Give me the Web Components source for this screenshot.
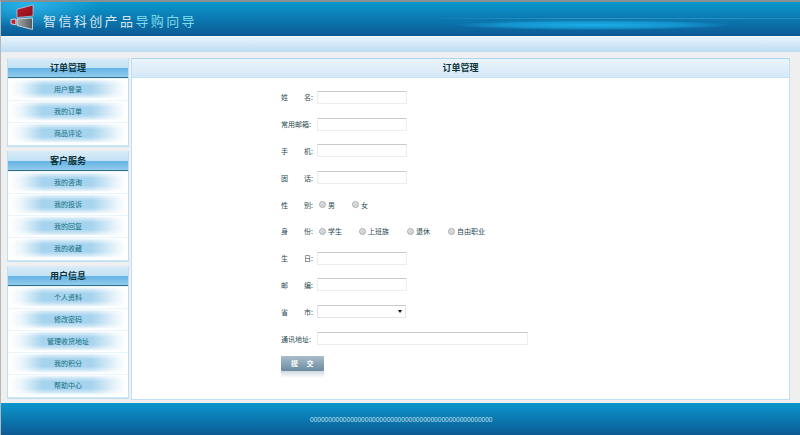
<!DOCTYPE html>
<html lang="zh">
<head>
<meta charset="utf-8">
<title>订单管理</title>
<style>
    html, body {
        margin: 0;
        height: 435px;
        overflow: hidden;
    }
    body {
        display: flex;
        flex-direction: column;
        background: #efefef;
        border-top: 2px solid #8a8f92;
        border-left: 1px solid #b5b8ba;
        box-sizing: border-box;
        font-family: "Liberation Sans", "Noto Sans CJK SC", sans-serif;
    }
    .content {
        flex: 1;
        display: flex;
        gap: 2px;
        padding: 6px 10px 3px 6px;
        min-height: 0;
    }
    .side {
        width: 122px;
        display: flex;
        flex-direction: column;
        gap: 4px;
    }
</style>
</head>
<body>
<app-header></app-header>
<div class="content">
    <div class="side">
        <side-group title="订单管理">
            <side-item>用户登录</side-item>
            <side-item>我的订单</side-item>
            <side-item>商品评论</side-item>
        </side-group>
        <side-group title="客户服务">
            <side-item>我的咨询</side-item>
            <side-item>我的投诉</side-item>
            <side-item>我的回复</side-item>
            <side-item>我的收藏</side-item>
        </side-group>
        <side-group title="用户信息">
            <side-item>个人资料</side-item>
            <side-item>修改密码</side-item>
            <side-item>管理收货地址</side-item>
            <side-item>我的积分</side-item>
            <side-item>帮助中心</side-item>
        </side-group>
    </div>
    <main-panel title="订单管理">
        <form-row a="姓" b="名"><text-field></text-field></form-row>
        <form-row full="常用邮箱"><text-field></text-field></form-row>
        <form-row a="手" b="机"><text-field></text-field></form-row>
        <form-row a="固" b="话"><text-field></text-field></form-row>
        <form-row a="性" b="别">
            <radio-option w="33">男</radio-option>
            <radio-option>女</radio-option>
        </form-row>
        <form-row a="身" b="份">
            <radio-option w="40">学生</radio-option>
            <radio-option w="48">上班族</radio-option>
            <radio-option w="41">退休</radio-option>
            <radio-option>自由职业</radio-option>
        </form-row>
        <form-row a="生" b="日"><text-field></text-field></form-row>
        <form-row a="邮" b="编"><text-field></text-field></form-row>
        <form-row a="省" b="市"><select-field></select-field></form-row>
        <form-row full="通讯地址"><text-field w="211"></text-field></form-row>
        <submit-button>提 交</submit-button>
    </main-panel>
</div>
<app-footer></app-footer>

<script>
const headerTpl = document.createElement('template');
headerTpl.innerHTML = /*html*/`
<style>
    :host { display: block; }
    .top {
        height: 34px;
        display: flex;
        align-items: center;
        gap: 7px;
        padding-left: 9px;
        background:
            radial-gradient(ellipse 140px 5px at 592px 23px, rgba(28,178,238,0.95), rgba(28,178,238,0.55) 65%, rgba(28,178,238,0)),
            linear-gradient(90deg, rgba(130,215,235,0) 52%, rgba(130,215,235,0.3) 72%, rgba(130,215,235,0.2) 100%) 0 16px / 100% 1px no-repeat,
            radial-gradient(ellipse 70px 24px at 30px 2px, rgba(50,185,240,0.8), rgba(50,185,240,0)),
            linear-gradient(#0a97cc, #0d5a94);
    }
    svg { display: block; overflow: visible; margin-top: -2px; }
    h1 {
        margin: 0;
        padding-top: 2px;
        font: 400 13px "Noto Sans CJK SC", sans-serif;
        letter-spacing: 2.4px;
        color: #d9e6ee;
    }
    h1 span { color: #7fdcec; }
    .band {
        height: 16px;
        box-sizing: border-box;
        border-top: 1px solid #f2f8fc;
        background: linear-gradient(#e8f3fb, #bcdcf3);
    }
</style>
<div class="top">
    <svg width="26" height="26" viewBox="0 0 26 26">
        <defs>
            <linearGradient id="red" x1="0" y1="0" x2="1" y2="1">
                <stop offset="0" stop-color="#c01c2c"/>
                <stop offset="1" stop-color="#860f1c"/>
            </linearGradient>
            <linearGradient id="steel" x1="0" y1="0" x2="1" y2="0">
                <stop offset="0" stop-color="#a4a7a9"/>
                <stop offset="1" stop-color="#55595d"/>
            </linearGradient>
        </defs>
        <polygon points="7,4.3 23,0 23,11 7,12.5" fill="url(#red)" stroke="#d9e4ea" stroke-width=".6"/>
        <polygon points="7,14 22.5,13 22.5,24.5 7,20.5" fill="url(#steel)" stroke="#e4e8ea" stroke-width=".8"/>
        <polygon points="1,14.5 5.8,14 5.8,19.8 1,18.8" fill="#c4202c" stroke="#eef0f1" stroke-width=".8"/>
    </svg>
    <h1>智信科创产品<span>导购向导</span></h1>
</div>
<div class="band"></div>
`;
class AppHeader extends HTMLElement {
    constructor() {
        super();
        this.attachShadow({ mode: 'open' });
        this.shadowRoot.appendChild(headerTpl.content.cloneNode(true));
    }
}
customElements.define('app-header', AppHeader);

const groupTpl = document.createElement('template');
groupTpl.innerHTML = /*html*/`
<style>
    :host {
        display: block;
        box-sizing: border-box;
        border: 1px solid #bfe0f4;
        border-top: 0;
        background: #fff;
    }
    h2 {
        margin: 0;
        height: 20px;
        box-sizing: border-box;
        border-bottom: 1px solid #2f6f86;
        background: linear-gradient(#d9ebf7 0, #c3e2f5 50%, #62b2e3 51%, #93cbec 100%);
        font: 700 9px/19px "Noto Sans CJK SC", sans-serif;
        text-align: center;
        color: #0d3338;
    }
    .list {
        display: flex;
        flex-direction: column;
        padding-bottom: 2px;
    }
    .list::after {
        content: '';
        height: 1px;
        margin-top: 1px;
        margin-bottom: -2px;
        background: #cfe6f5;
    }
</style>
<h2></h2>
<div class="list"><slot></slot></div>
`;
class SideGroup extends HTMLElement {
    constructor() {
        super();
        this.attachShadow({ mode: 'open' });
        this.shadowRoot.appendChild(groupTpl.content.cloneNode(true));
        this.shadowRoot.querySelector('h2').textContent = this.getAttribute('title');
        this.removeAttribute('title');
    }
}
customElements.define('side-group', SideGroup);

const itemTpl = document.createElement('template');
itemTpl.innerHTML = /*html*/`
<style>
    :host {
        display: block;
        height: 22px;
        box-sizing: border-box;
        padding: 1px 2px 1px 2px;
        background: linear-gradient(#eaf5fb 0 1px, #fff 1px);
    }
    div {
        height: 20px;
        background:
            linear-gradient(#fff 0, rgba(255,255,255,0.5) 12%, rgba(255,255,255,0) 32%, rgba(255,255,255,0) 68%, rgba(255,255,255,0.5) 88%, #fff 100%),
            linear-gradient(90deg, #fff 0, #eaf5fb 10%, #a6d3ee 28%, #a6d3ee 70%, #eaf5fb 92%, #fff 100%);
        font: 400 7px/21px "Noto Sans CJK SC", sans-serif;
        text-align: center;
        color: #14707f;
    }
</style>
<div><slot></slot></div>
`;
class SideItem extends HTMLElement {
    constructor() {
        super();
        this.attachShadow({ mode: 'open' });
        this.shadowRoot.appendChild(itemTpl.content.cloneNode(true));
    }
}
customElements.define('side-item', SideItem);

const panelTpl = document.createElement('template');
panelTpl.innerHTML = /*html*/`
<style>
    :host {
        display: flex;
        flex-direction: column;
        flex: 1;
        box-sizing: border-box;
        border: 1px solid #bfe0f4;
        border-top-color: #a9d6f2;
        background: #fff;
    }
    h2 {
        margin: 0;
        height: 19px;
        box-sizing: border-box;
        border-bottom: 1px solid #c6e3f5;
        background: linear-gradient(#eaf4fb, #d6e9f7);
        font: 700 9px/18px "Noto Sans CJK SC", sans-serif;
        text-align: center;
        color: #0d3338;
    }
    .form {
        padding: 6px 0 0 149px;
    }
</style>
<h2></h2>
<div class="form"><slot></slot></div>
`;
class MainPanel extends HTMLElement {
    constructor() {
        super();
        this.attachShadow({ mode: 'open' });
        this.shadowRoot.appendChild(panelTpl.content.cloneNode(true));
        this.shadowRoot.querySelector('h2').textContent = this.getAttribute('title');
        this.removeAttribute('title');
    }
}
customElements.define('main-panel', MainPanel);

const rowTpl = document.createElement('template');
rowTpl.innerHTML = /*html*/`
<style>
    :host {
        display: flex;
        align-items: center;
        height: 26.8px;
        font: 400 7px "Noto Sans CJK SC", sans-serif;
        color: #1f4a52;
    }
    .label {
        display: flex;
        justify-content: space-between;
        width: 32px;
        margin-right: 4px;
        white-space: nowrap;
    }
    .field {
        display: flex;
        align-items: center;
    }
</style>
<div class="label"></div>
<div class="field"><slot></slot></div>
`;
class FormRow extends HTMLElement {
    constructor() {
        super();
        this.attachShadow({ mode: 'open' });
        this.shadowRoot.appendChild(rowTpl.content.cloneNode(true));
        const label = this.shadowRoot.querySelector('.label');
        const full = this.getAttribute('full');
        if (full) {
            label.innerHTML = `<span>${full}:</span>`;
        } else {
            label.innerHTML = `<span>${this.getAttribute('a')}</span><span>${this.getAttribute('b')}:</span>`;
        }
    }
}
customElements.define('form-row', FormRow);

const fieldTpl = document.createElement('template');
fieldTpl.innerHTML = /*html*/`
<style>
    :host { display: block; }
    input {
        display: block;
        width: 90px;
        height: 13px;
        margin: 0;
        padding: 0;
        box-sizing: border-box;
        background: #fff;
        border: 1px solid #ecedf0;
        border-top-color: #cacace;
        border-radius: 1px;
        outline: 0;
    }
</style>
<input type="text">
`;
class TextField extends HTMLElement {
    constructor() {
        super();
        this.attachShadow({ mode: 'open' });
        this.shadowRoot.appendChild(fieldTpl.content.cloneNode(true));
        if (this.hasAttribute('w')) {
            this.shadowRoot.querySelector('input').style.width = this.getAttribute('w') + 'px';
        }
    }
}
customElements.define('text-field', TextField);

const selectTpl = document.createElement('template');
selectTpl.innerHTML = /*html*/`
<style>
    :host {
        display: flex;
        align-items: center;
        justify-content: flex-end;
        width: 89px;
        height: 13px;
        box-sizing: border-box;
        padding-right: 3px;
        background: #fff;
        border: 1px solid #e6e6ea;
        border-top-color: #cacace;
        border-radius: 1px;
    }
    i {
        width: 0;
        height: 0;
        border: 2.5px solid transparent;
        border-top: 3px solid #111;
        border-bottom: 0;
    }
</style>
<i></i>
`;
class SelectField extends HTMLElement {
    constructor() {
        super();
        this.attachShadow({ mode: 'open' });
        this.shadowRoot.appendChild(selectTpl.content.cloneNode(true));
    }
}
customElements.define('select-field', SelectField);

const radioTpl = document.createElement('template');
radioTpl.innerHTML = /*html*/`
<style>
    :host {
        display: flex;
        align-items: center;
        gap: 2px;
        margin-left: 2px;
    }
    i {
        width: 7px;
        height: 7px;
        box-sizing: border-box;
        border-radius: 50%;
        border: 1px solid #a5a9ab;
        background: radial-gradient(circle at 50% 60%, #c9cdcf, #eceeef);
    }
</style>
<i></i><slot></slot>
`;
class RadioOption extends HTMLElement {
    constructor() {
        super();
        this.attachShadow({ mode: 'open' });
        this.shadowRoot.appendChild(radioTpl.content.cloneNode(true));
        if (this.hasAttribute('w')) {
            this.style.width = this.getAttribute('w') - 2 + 'px';
        }
    }
}
customElements.define('radio-option', RadioOption);

const buttonTpl = document.createElement('template');
buttonTpl.innerHTML = /*html*/`
<style>
    :host {
        display: block;
        width: 43px;
        margin-top: 4px;
    }
    div {
        height: 15px;
        background: linear-gradient(#a9bdcb, #6b8ba0);
        border-radius: 1px;
        font: 700 7px/15px "Noto Sans CJK SC", sans-serif;
        letter-spacing: 0.5px;
        word-spacing: 6px;
        text-align: center;
        color: #fff;
    }
    b {
        display: block;
        height: 7px;
        background: linear-gradient(#cfd9df, #fff);
    }
</style>
<div><slot></slot></div><b></b>
`;
class SubmitButton extends HTMLElement {
    constructor() {
        super();
        this.attachShadow({ mode: 'open' });
        this.shadowRoot.appendChild(buttonTpl.content.cloneNode(true));
    }
}
customElements.define('submit-button', SubmitButton);

const footerTpl = document.createElement('template');
footerTpl.innerHTML = /*html*/`
<style>
    :host {
        display: block;
        height: 32px;
        box-sizing: border-box;
        padding: 12px 0 0 309px;
        background: linear-gradient(#0a97cc, #0d5a94);
        font: 400 6.57px/10px "Liberation Sans", sans-serif;
        color: #c6e2ee;
        white-space: nowrap;
    }
</style>
<span>${'0'.repeat(50)}</span>
`;
class AppFooter extends HTMLElement {
    constructor() {
        super();
        this.attachShadow({ mode: 'open' });
        this.shadowRoot.appendChild(footerTpl.content.cloneNode(true));
    }
}
customElements.define('app-footer', AppFooter);
</script>
</body>
</html>
